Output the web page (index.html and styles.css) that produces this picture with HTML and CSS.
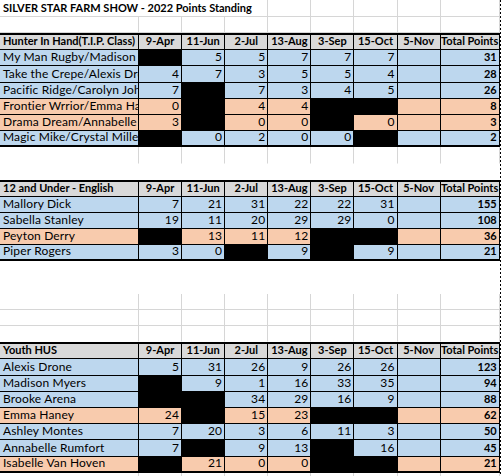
FILE: index.html
```html
<!DOCTYPE html>
<html>
<head>
<meta charset="utf-8">
<title>Silver Star Farm Show - 2022 Points Standing</title>
<link rel="stylesheet" href="styles.css">
</head>
<body>
<div class="sheet">
  <div class="row">
    <div class="c ttl">SILVER STAR FARM SHOW - 2022 Points Standing</div>
    <div class="c"></div><div class="c"></div><div class="c"></div><div class="c"></div><div class="c"></div>
  </div>
  <div class="row">
    <div class="c"></div><div class="c"></div><div class="c"></div><div class="c"></div><div class="c"></div><div class="c"></div><div class="c"></div><div class="c"></div><div class="c"></div>
  </div>

  <section class="tbl">
    <div class="row hdr">
      <div class="c name">Hunter In Hand(T.I.P. Class)</div>
      <div class="c">9-Apr</div><div class="c">11-Jun</div><div class="c">2-Jul</div><div class="c">13-Aug</div><div class="c">3-Sep</div><div class="c">15-Oct</div><div class="c">5-Nov</div><div class="c">Total Points</div>
    </div>
    <div class="row blue">
      <div class="c name">My Man Rugby/Madison Myers</div>
      <div class="c k"></div><div class="c">5</div><div class="c">5</div><div class="c">7</div><div class="c">7</div><div class="c">7</div><div class="c"></div><div class="c tot">31</div>
    </div>
    <div class="row blue">
      <div class="c name">Take the Crepe/Alexis Drone</div>
      <div class="c">4</div><div class="c">7</div><div class="c">3</div><div class="c">5</div><div class="c">5</div><div class="c">4</div><div class="c"></div><div class="c tot">28</div>
    </div>
    <div class="row blue">
      <div class="c name">Pacific Ridge/Carolyn Johnson</div>
      <div class="c">7</div><div class="c k"></div><div class="c">7</div><div class="c">3</div><div class="c">4</div><div class="c">5</div><div class="c"></div><div class="c tot">26</div>
    </div>
    <div class="row orange">
      <div class="c name">Frontier Wrrior/Emma Haney</div>
      <div class="c">0</div><div class="c k"></div><div class="c">4</div><div class="c">4</div><div class="c k"></div><div class="c k"></div><div class="c"></div><div class="c tot">8</div>
    </div>
    <div class="row orange">
      <div class="c name">Drama Dream/Annabelle Rumfort</div>
      <div class="c">3</div><div class="c k"></div><div class="c">0</div><div class="c">0</div><div class="c k"></div><div class="c">0</div><div class="c"></div><div class="c tot">3</div>
    </div>
    <div class="row blue last">
      <div class="c name">Magic Mike/Crystal Miller</div>
      <div class="c k"></div><div class="c">0</div><div class="c">2</div><div class="c">0</div><div class="c">0</div><div class="c k"></div><div class="c"></div><div class="c tot">2</div>
    </div>
  </section>

  <div class="row vonly">
    <div class="c"></div><div class="c"></div><div class="c"></div><div class="c"></div><div class="c"></div><div class="c"></div><div class="c"></div><div class="c"></div><div class="c"></div>
  </div>
  <div class="row blank">
    <div class="c"></div><div class="c"></div><div class="c"></div><div class="c"></div><div class="c"></div><div class="c"></div><div class="c"></div><div class="c"></div><div class="c"></div>
  </div>

  <section class="tbl">
    <div class="row hdr">
      <div class="c name">12 and Under - English</div>
      <div class="c">9-Apr</div><div class="c">11-Jun</div><div class="c">2-Jul</div><div class="c">13-Aug</div><div class="c">3-Sep</div><div class="c">15-Oct</div><div class="c">5-Nov</div><div class="c">Total Points</div>
    </div>
    <div class="row blue">
      <div class="c name">Mallory Dick</div>
      <div class="c">7</div><div class="c">21</div><div class="c">31</div><div class="c">22</div><div class="c">22</div><div class="c">31</div><div class="c"></div><div class="c tot">155</div>
    </div>
    <div class="row blue">
      <div class="c name">Sabella Stanley</div>
      <div class="c">19</div><div class="c">11</div><div class="c">20</div><div class="c">29</div><div class="c">29</div><div class="c">0</div><div class="c"></div><div class="c tot">108</div>
    </div>
    <div class="row orange">
      <div class="c name">Peyton Derry</div>
      <div class="c k"></div><div class="c">13</div><div class="c">11</div><div class="c">12</div><div class="c k"></div><div class="c k"></div><div class="c"></div><div class="c tot">36</div>
    </div>
    <div class="row blue last">
      <div class="c name">Piper Rogers</div>
      <div class="c">3</div><div class="c">0</div><div class="c k"></div><div class="c">9</div><div class="c k"></div><div class="c">9</div><div class="c"></div><div class="c tot">21</div>
    </div>
  </section>

  <div class="row blank">
    <div class="c"></div><div class="c"></div><div class="c"></div><div class="c"></div><div class="c"></div><div class="c"></div><div class="c"></div><div class="c"></div><div class="c"></div>
  </div>
  <div class="row blank">
    <div class="c"></div><div class="c"></div><div class="c"></div><div class="c"></div><div class="c"></div><div class="c"></div><div class="c"></div><div class="c"></div><div class="c"></div>
  </div>
  <div class="row">
    <div class="c"></div><div class="c"></div><div class="c"></div><div class="c"></div><div class="c"></div><div class="c"></div><div class="c"></div><div class="c"></div><div class="c"></div>
  </div>
  <div class="row">
    <div class="c"></div><div class="c"></div><div class="c"></div><div class="c"></div><div class="c"></div><div class="c"></div><div class="c"></div><div class="c"></div><div class="c"></div>
  </div>
  <div class="row vonly">
    <div class="c"></div><div class="c"></div><div class="c"></div><div class="c"></div><div class="c"></div><div class="c"></div><div class="c"></div><div class="c"></div><div class="c"></div>
  </div>

  <section class="tbl">
    <div class="row hdr">
      <div class="c name">Youth HUS</div>
      <div class="c">9-Apr</div><div class="c">11-Jun</div><div class="c">2-Jul</div><div class="c">13-Aug</div><div class="c">3-Sep</div><div class="c">15-Oct</div><div class="c">5-Nov</div><div class="c">Total Points</div>
    </div>
    <div class="row blue">
      <div class="c name">Alexis Drone</div>
      <div class="c">5</div><div class="c">31</div><div class="c">26</div><div class="c">9</div><div class="c">26</div><div class="c">26</div><div class="c"></div><div class="c tot">123</div>
    </div>
    <div class="row blue">
      <div class="c name">Madison Myers</div>
      <div class="c k"></div><div class="c">9</div><div class="c">1</div><div class="c">16</div><div class="c">33</div><div class="c">35</div><div class="c"></div><div class="c tot">94</div>
    </div>
    <div class="row blue">
      <div class="c name">Brooke Arena</div>
      <div class="c k"></div><div class="c k"></div><div class="c">34</div><div class="c">29</div><div class="c">16</div><div class="c">9</div><div class="c"></div><div class="c tot">88</div>
    </div>
    <div class="row orange">
      <div class="c name">Emma Haney</div>
      <div class="c">24</div><div class="c k"></div><div class="c">15</div><div class="c">23</div><div class="c k"></div><div class="c k"></div><div class="c"></div><div class="c tot">62</div>
    </div>
    <div class="row blue">
      <div class="c name">Ashley Montes</div>
      <div class="c">7</div><div class="c">20</div><div class="c">3</div><div class="c">6</div><div class="c">11</div><div class="c">3</div><div class="c"></div><div class="c tot">50</div>
    </div>
    <div class="row blue">
      <div class="c name">Annabelle Rumfort</div>
      <div class="c">7</div><div class="c k"></div><div class="c">9</div><div class="c">13</div><div class="c k"></div><div class="c">16</div><div class="c"></div><div class="c tot">45</div>
    </div>
    <div class="row orange last">
      <div class="c name">Isabelle Van Hoven</div>
      <div class="c k"></div><div class="c">21</div><div class="c">0</div><div class="c">0</div><div class="c k"></div><div class="c k"></div><div class="c"></div><div class="c tot">21</div>
    </div>
  </section>

  <div class="row vonly">
    <div class="c"></div><div class="c"></div><div class="c"></div><div class="c"></div><div class="c"></div><div class="c"></div><div class="c"></div><div class="c"></div><div class="c"></div>
  </div>

  <div class="pagebreak"></div>
</div>
</body>
</html>
```
FILE: styles.css
```css
body {
  margin: 0;
  background: #fff;
  font-family: Lato, "Liberation Sans", sans-serif;
  font-size: 12px;
  letter-spacing: 0.15px;
  color: #000;
}

.sheet {
  position: relative;
  width: 502px;
  height: 476px;
  overflow: hidden;
}

.row {
  display: grid;
  grid-template-columns: 139px repeat(7, 43.1px) 59px;
  height: 16.2px;
}

.row:first-child {
  height: 17px;
}

.c {
  box-sizing: border-box;
  display: flex;
  align-items: flex-end;
  justify-content: flex-end;
  padding: 0 2px 1px 2px;
  line-height: 14px;
  white-space: nowrap;
  overflow: hidden;
  border-right: 1px solid #d6d6d6;
  border-bottom: 1px solid #d6d6d6;
}

.ttl {
  grid-column: 1 / 5;
  justify-content: flex-start;
  padding-left: 3px;
  font-weight: bold;
  font-size: 11px;
  letter-spacing: 0;
  overflow: visible;
}

.blank .c {
  border-color: transparent;
}

.vonly .c {
  border-bottom-color: transparent;
}

.tbl .c {
  border-right-color: #000;
  border-bottom-color: #000;
}

.tbl .name {
  justify-content: flex-start;
  padding-left: 3px;
}

.hdr .c {
  border-top: 2px solid #000;
  background: #d9d9d9;
  font-weight: bold;
  font-size: 11px;
  letter-spacing: 0;
  justify-content: center;
  padding-left: 0;
  padding-right: 0;
}

.hdr .name {
  justify-content: flex-start;
  padding-left: 3px;
}

.last .c {
  border-bottom-width: 2px;
}

.blue .c {
  background: #bdd7ee;
}

.orange .c {
  background: #f8cbad;
}

.tbl .k {
  background: #000;
}

.tot {
  font-weight: bold;
  font-size: 11px;
  letter-spacing: 0;
}

.pagebreak {
  position: absolute;
  left: 500px;
  top: 0;
  width: 1px;
  height: 476px;
  background: repeating-linear-gradient(to bottom, #000 0 2px, transparent 2px 4px);
}
```
